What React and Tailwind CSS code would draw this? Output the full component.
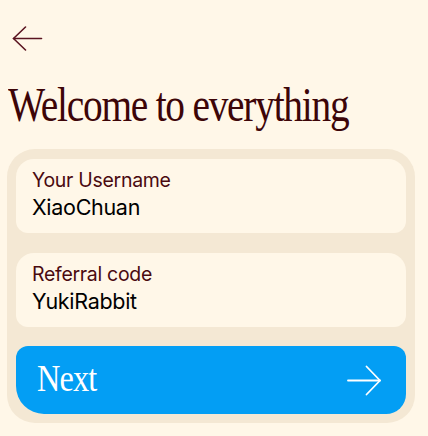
import React, { useState } from 'react'

const sans = { fontFamily: 'Inter, "Noto Sans", sans-serif' }
const serif = { fontFamily: '"Liberation Serif", "DejaVu Serif", serif' }

const Field = ({ label, value }) => (
  <div className="bg-[#fff7e8] rounded-t-[18px] rounded-b-[12px] px-4 pt-[9px] h-[74px]" style={sans}>
    <div className="text-[19.5px] leading-[25px] text-[#4a0a10] tracking-[-0.3px]">{label}</div>
    <div className="text-[21.5px] leading-[28px] text-black tracking-[-0.3px]">{value}</div>
  </div>
)

const App = () => {
  const [username] = useState('XiaoChuan')
  const [referral] = useState('YukiRabbit')

  return (
    <div className="w-[428px] h-[436px] bg-[#fff7e8] overflow-hidden">
      <div className="pt-[26px] pl-[12px]">
        <svg width="31" height="26" viewBox="0 0 31 26" fill="none" stroke="#5a1420" strokeWidth="1.6" strokeLinecap="round" strokeLinejoin="round">
          <path d="M1.5 12.5H29.5" />
          <path d="M13.5 1L1.5 12.5L13.5 24" />
        </svg>
      </div>
      <h1
        className="mt-[26px] ml-[8px] text-[48px] leading-[54px] text-[#3d0508] tracking-[-1.5px] origin-left scale-x-[0.82] whitespace-nowrap"
        style={serif}
      >
        Welcome to everything
      </h1>
      <div className="ml-[7px] mr-[13px] mt-[17px] bg-[#f4e8d4] rounded-[28px] p-[9px] pt-[10px] flex flex-col gap-[20px]">
        <Field label="Your Username" value={username} />
        <Field label="Referral code" value={referral} />
        <button className="mt-[-1px] h-[68px] bg-[#039ef4] rounded-t-[12px] rounded-bl-[28px] rounded-br-[20px] flex items-center justify-between pl-[21px] pr-[24px] text-white">
          <span className="text-[38px] leading-none tracking-[-1px] origin-left scale-x-[0.85] -mt-[4px]" style={serif}>Next</span>
          <svg width="35" height="31" viewBox="0 0 35 31" fill="none" stroke="white" strokeWidth="1.8" strokeLinecap="round" strokeLinejoin="round">
            <path d="M1 15.5H33" />
            <path d="M19.5 1.5L33 15.5L19.5 29.5" />
          </svg>
        </button>
      </div>
    </div>
  )
}

export default App
